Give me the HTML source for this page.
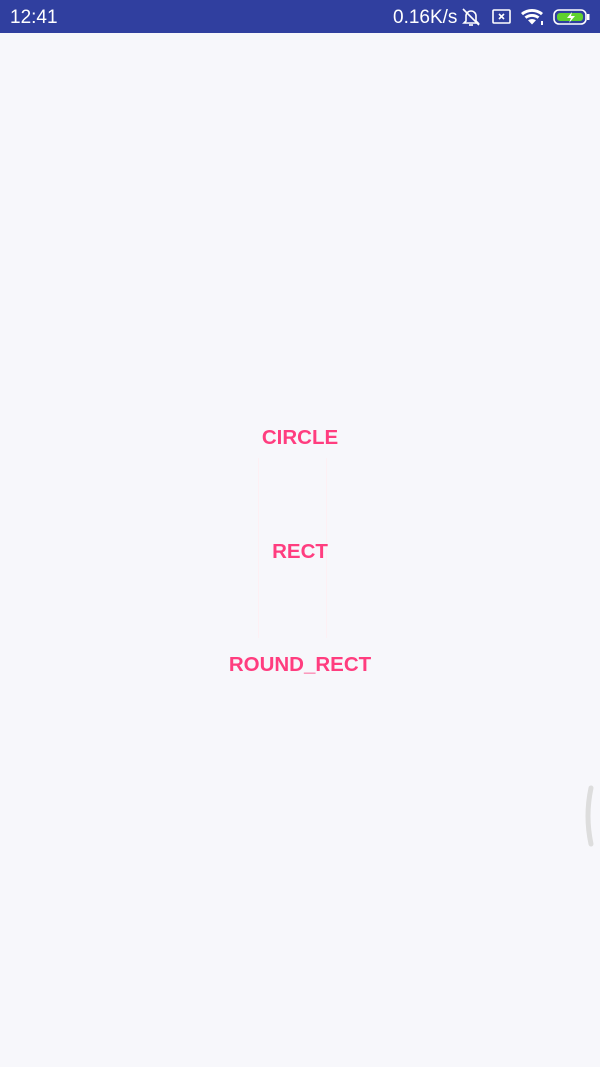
<!DOCTYPE html>
<html><head><meta charset="utf-8"><style>
html,body{margin:0;padding:0}
body{width:600px;height:1067px;background:#f7f7fb;position:relative;overflow:hidden;font-family:"Liberation Sans",sans-serif}
.sb{position:absolute;left:0;top:0;width:600px;height:33px;background:#303f9f;color:#fff}
.t{position:absolute;font-size:19px;top:7px}
.lbl{position:absolute;left:0;width:600px;text-align:center;color:#ff3d7f;font-size:20.5px;font-weight:bold}
</style></head><body>
<div class="sb">
<div class="t" style="left:10px">12:41</div>
<div class="t" style="left:393px">0.16K/s</div>
<svg style="position:absolute;left:460px;top:6px" width="22" height="22" viewBox="0 0 22 22" fill="none" stroke="#fff" stroke-width="1.6"><path d="M6 15V10a5 5 0 0 1 10 0v5l2 2H4z"/><path d="M9 19h4"/><path d="M3 3l16 16"/></svg>
<svg style="position:absolute;left:491px;top:8px" width="22" height="18" viewBox="0 0 22 18" fill="none" stroke="#fff" stroke-width="1.6"><rect x="2" y="2" width="17" height="13" rx="1"/><path d="M8 6l5 5M13 6l-5 5"/></svg>
<svg style="position:absolute;left:520px;top:7px" width="26" height="20" viewBox="0 0 26 20" fill="#fff"><path d="M1 6a17 17 0 0 1 22 0l-2 2.2a14 14 0 0 0-18 0z"/><path d="M4.5 9.6a12 12 0 0 1 15 0l-2 2.2a9 9 0 0 0-11 0z"/><path d="M8 13.2a7 7 0 0 1 8 0L12 17.5z"/><rect x="21" y="14" width="2" height="4"/></svg>
<svg style="position:absolute;left:553px;top:8px" width="38" height="18" viewBox="0 0 38 18"><rect x="1" y="2" width="32" height="14" rx="5" fill="none" stroke="#fff" stroke-width="1.6"/><rect x="4" y="5" width="26" height="8" rx="3" fill="#5fd12e"/><rect x="34" y="6" width="2.5" height="6" fill="#fff"/><path d="M19 4l-5 6h4l-2 5 6-7h-4z" fill="#fff"/></svg>
</div>
<div class="lbl" style="top:426px">CIRCLE</div>
<div style="position:absolute;left:258px;top:458px;width:1px;height:180px;background:#fdf0f4"></div>
<div style="position:absolute;left:326px;top:458px;width:1px;height:180px;background:#fdf0f4"></div>
<div class="lbl" style="top:540px">RECT</div>
<div class="lbl" style="top:653px">ROUND_RECT</div>
<svg style="position:absolute;left:582px;top:785px" width="14" height="62" viewBox="0 0 14 62"><path d="M9 3Q3 31 9 59" fill="none" stroke="#ddd" stroke-width="5" stroke-linecap="round"/></svg>
</body></html>
